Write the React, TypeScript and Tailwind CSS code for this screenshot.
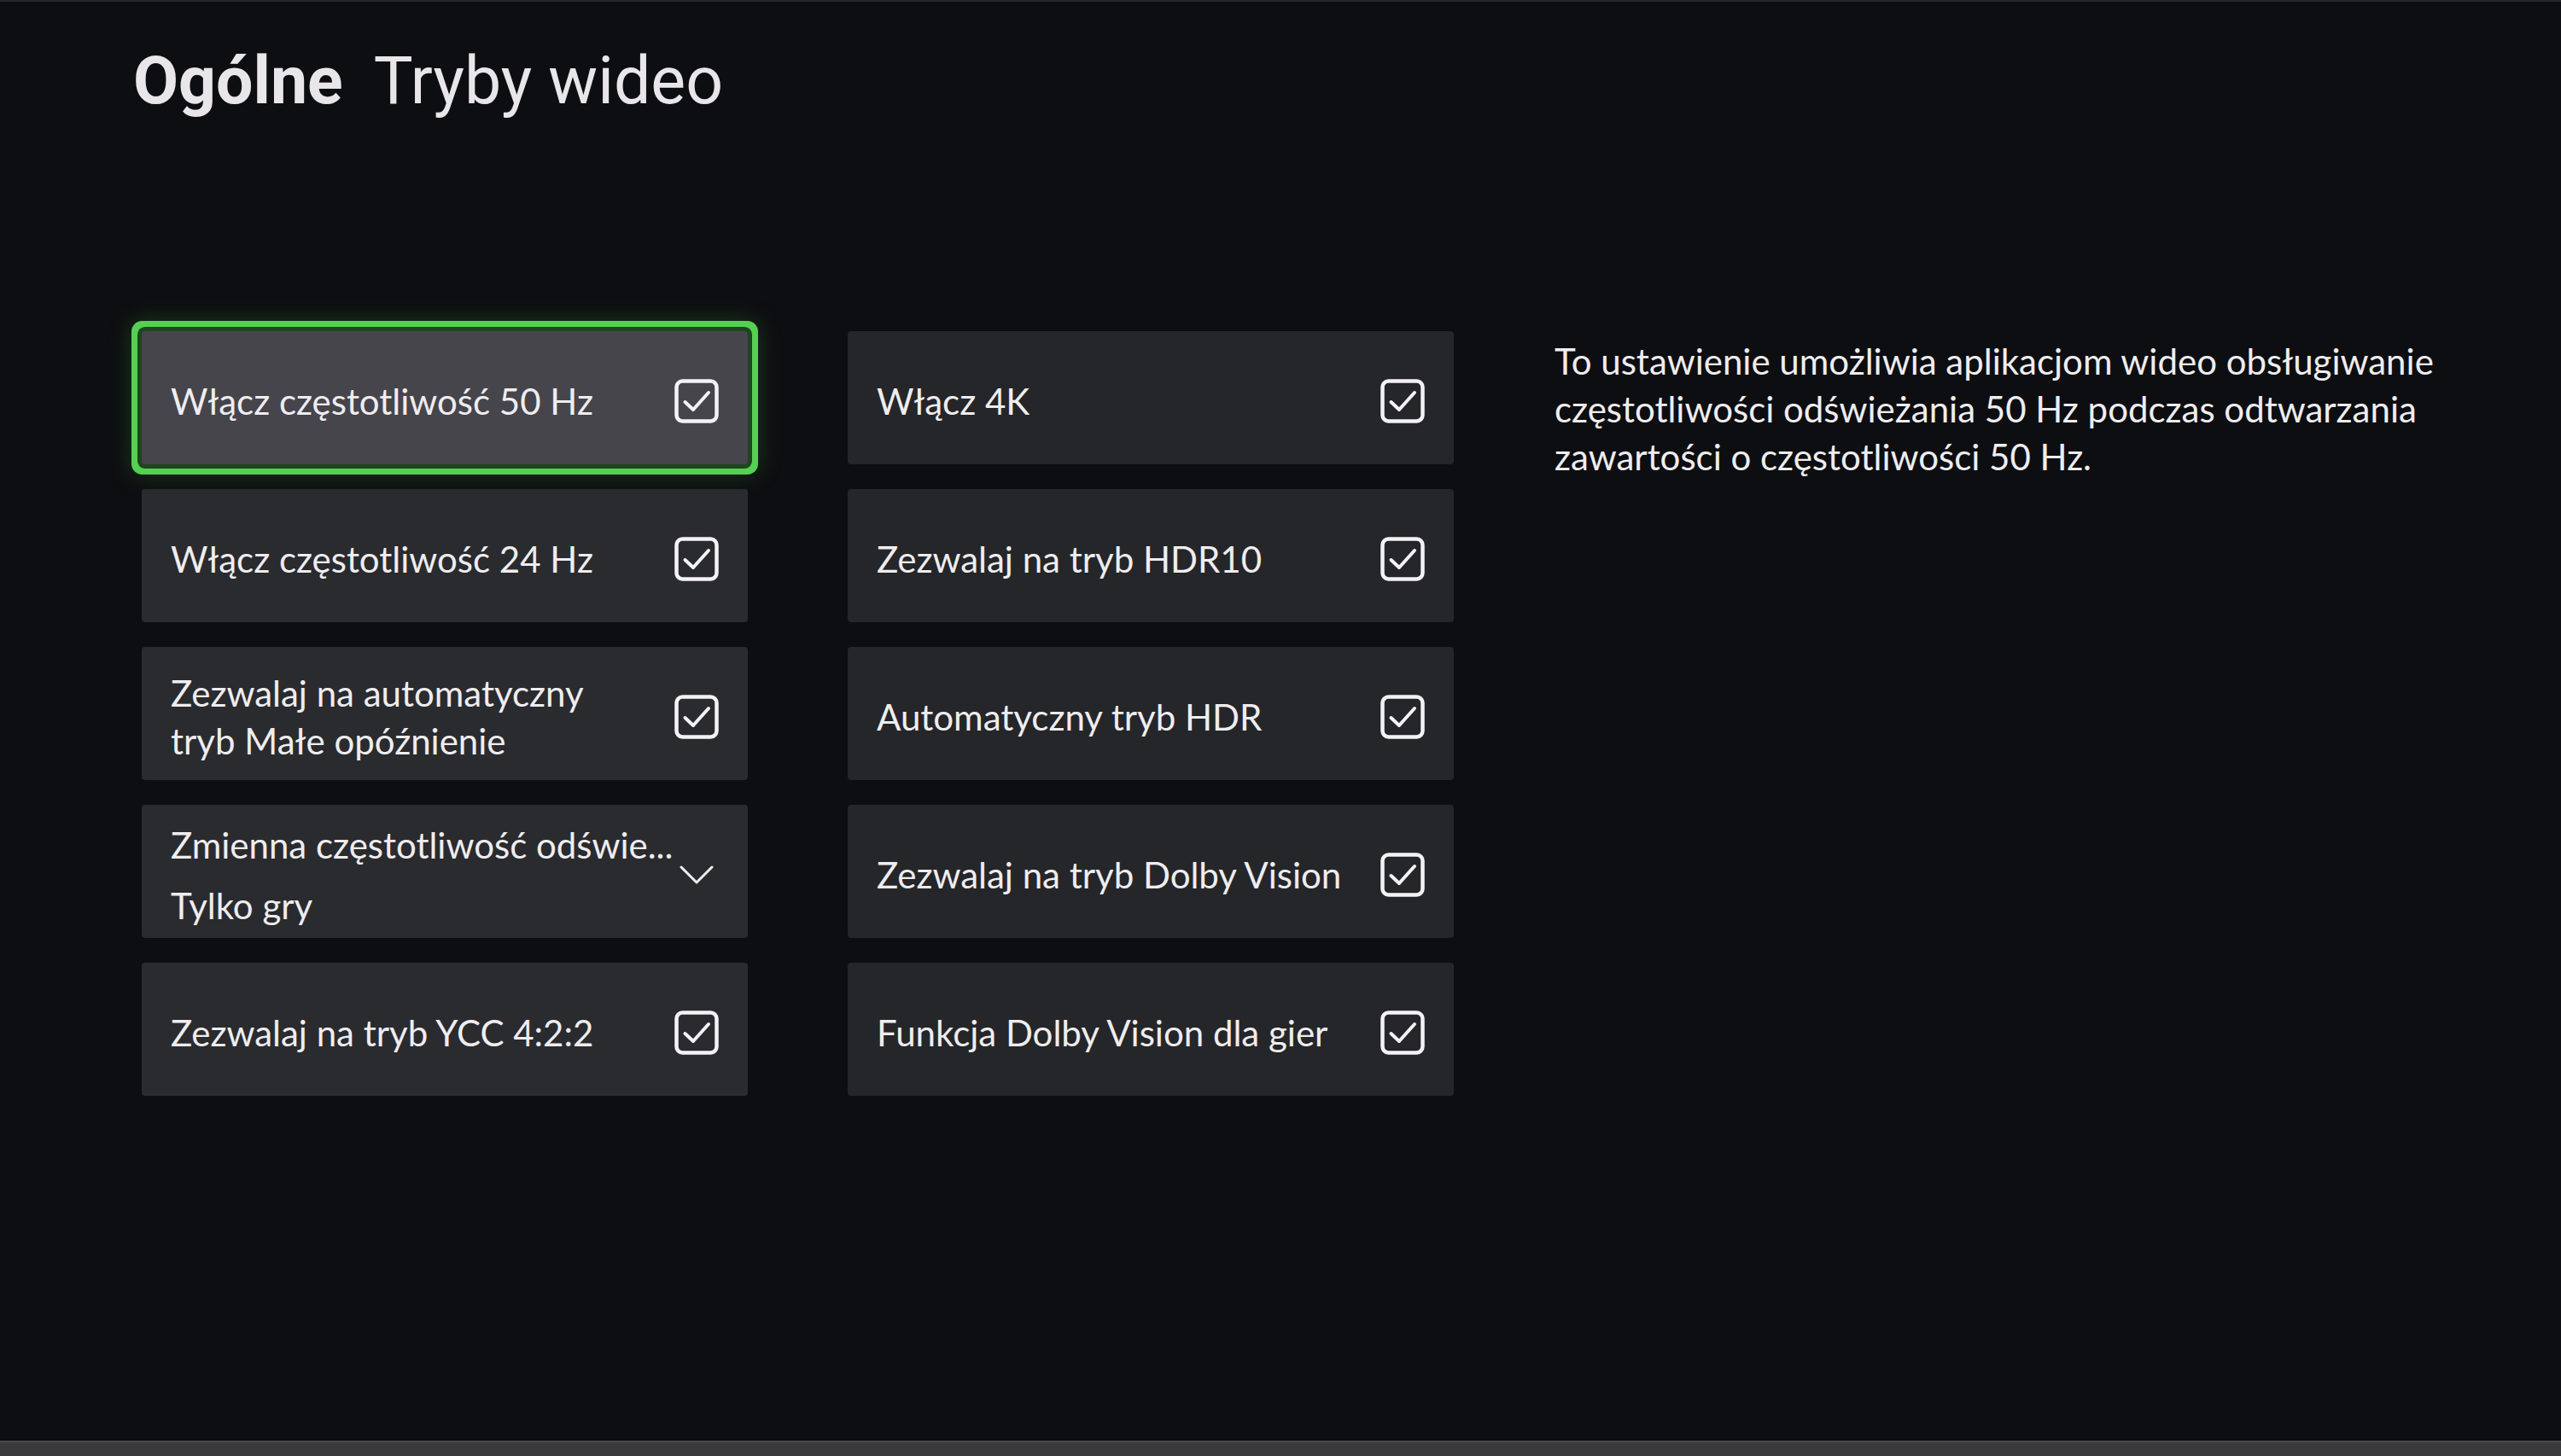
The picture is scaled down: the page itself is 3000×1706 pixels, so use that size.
import { ReactNode } from "react";

type Tile = {
  label: ReactNode;
  value?: string;
  kind: "check" | "select";
  focused?: boolean;
};

const leftTiles: Tile[] = [
  { label: "Włącz częstotliwość 50 Hz", kind: "check", focused: true },
  { label: "Włącz częstotliwość 24 Hz", kind: "check" },
  {
    label: (
      <>
        Zezwalaj na automatyczny
        <br />
        tryb Małe opóźnienie
      </>
    ),
    kind: "check",
  },
  { label: "Zmienna częstotliwość odświe...", value: "Tylko gry", kind: "select" },
  { label: "Zezwalaj na tryb YCC 4:2:2", kind: "check" },
];

const rightTiles: Tile[] = [
  { label: "Włącz 4K", kind: "check" },
  { label: "Zezwalaj na tryb HDR10", kind: "check" },
  { label: "Automatyczny tryb HDR", kind: "check" },
  { label: "Zezwalaj na tryb Dolby Vision", kind: "check" },
  { label: "Funkcja Dolby Vision dla gier", kind: "check" },
];

function CheckBox() {
  return (
    <svg width="52" height="52" viewBox="0 0 52 52" fill="none" className="shrink-0">
      <rect x="2.5" y="2.5" width="47" height="47" rx="7" stroke="#f4f2f4" strokeWidth="4.5" />
      <path d="M12.5 27 L22 36 L40 16" stroke="#f4f2f4" strokeWidth="4" strokeLinecap="round" strokeLinejoin="round" />
    </svg>
  );
}

function Chevron() {
  return (
    <svg width="40" height="24" viewBox="0 0 40 24" fill="none" className="shrink-0 mr-[6px]">
      <path d="M2 3 L20 21 L38 3" stroke="#eeeeee" strokeWidth="3" strokeLinecap="round" strokeLinejoin="round" />
    </svg>
  );
}

function SettingTile({ tile, bg }: { tile: Tile; bg: string }) {
  const base =
    "w-[710px] h-[156px] rounded-[4px] flex items-center justify-between pl-[34px] pr-[34px] pt-[8px]";
  const look = tile.focused
    ? "bg-[#46454c] shadow-[0_0_0_5px_#1e451f,0_0_0_12px_#56d053,0_0_28px_12px_rgba(70,190,65,0.25)]"
    : bg;

  return (
    <div className={`${base} ${look}`}>
      {tile.kind === "select" ? (
        <div className="flex flex-col gap-[15px]">
          <span>{tile.label}</span>
          <span>{tile.value}</span>
        </div>
      ) : (
        <span>{tile.label}</span>
      )}
      {tile.kind === "check" ? <CheckBox /> : <Chevron />}
    </div>
  );
}

export default function App() {
  return (
    <div className="min-h-screen w-full bg-[#0d0e11] flex flex-col border-t-2 border-[#26262a] text-[#efedef] font-['Lato','Noto_Sans',sans-serif]">
      <main className="flex-1 pl-[156px] pt-[55px]">
        {/* Header */}
        <h1 className="flex gap-[36px] text-[77px] leading-none text-[#e8e6e8] font-['Roboto','Noto_Sans',sans-serif]">
          <span className="font-bold">Ogólne</span>
          <span className="font-normal">Tryby wideo</span>
        </h1>

        {/* Settings grid + description */}
        <div className="mt-[254px] ml-[10px] flex gap-[118px] text-[42px] leading-[56px]">
          <div className="flex flex-col gap-[29px]">
            {leftTiles.map((t, i) => (
              <SettingTile key={i} tile={t} bg="bg-[#2a2b2f]" />
            ))}
          </div>
          <div className="flex flex-col gap-[29px] -ml-[1px]">
            {rightTiles.map((t, i) => (
              <SettingTile key={i} tile={t} bg="bg-[#252629]" />
            ))}
          </div>
          <p className="w-[1080px] pt-[7px]">
            To ustawienie umożliwia aplikacjom wideo obsługiwanie częstotliwości odświeżania 50 Hz podczas
            odtwarzania zawartości o częstotliwości 50 Hz.
          </p>
        </div>
      </main>
      <div className="h-[18px] bg-[#3a3a3d] border-t-2 border-[#4a4a4e]" />
    </div>
  );
}
